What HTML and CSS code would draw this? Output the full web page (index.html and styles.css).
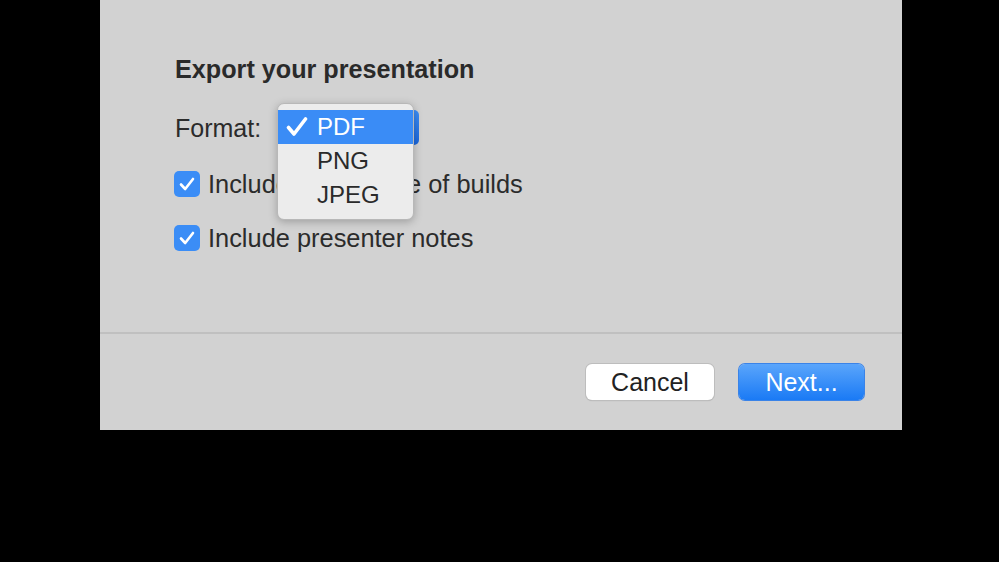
FILE: index.html
```html
<!DOCTYPE html>
<html>
<head>
<meta charset="utf-8">
<link rel="stylesheet" href="styles.css">
</head>
<body>
<div class="dialog">
  <div class="content">
    <h1 class="title">Export your presentation</h1>
    <div class="row format-row">
      <span class="label">Format:</span>
      <div class="popup-wrap">
        <div class="popup-button"></div>
        <div class="menu">
          <div class="item selected"><svg class="check" viewBox="0 0 22 22" width="22" height="22"><path d="M2.5 11.5 L8 18 L19.5 3" fill="none" stroke="#fff" stroke-width="3.6" stroke-linecap="round" stroke-linejoin="round"/></svg>PDF</div>
          <div class="item">PNG</div>
          <div class="item">JPEG</div>
        </div>
      </div>
    </div>
    <label class="row check-row">
      <span class="box"><svg viewBox="0 0 26 26" width="26" height="26"><path d="M7 13.5 L11.2 18 L19 8" fill="none" stroke="#fff" stroke-width="2.6" stroke-linecap="round" stroke-linejoin="round"/></svg></span>
      <span class="text">Include each stage of builds</span>
    </label>
    <label class="row check-row">
      <span class="box"><svg viewBox="0 0 26 26" width="26" height="26"><path d="M7 13.5 L11.2 18 L19 8" fill="none" stroke="#fff" stroke-width="2.6" stroke-linecap="round" stroke-linejoin="round"/></svg></span>
      <span class="text">Include presenter notes</span>
    </label>
  </div>
  <div class="footer">
    <button class="btn cancel">Cancel</button>
    <button class="btn next">Next...</button>
  </div>
</div>
</body>
</html>
```
FILE: styles.css
```css
html, body {
  margin: 0;
  padding: 0;
  background: #000;
  height: 100%;
}
body {
  font-family: "Liberation Sans", Arial, sans-serif;
  color: #2b2b2b;
}
.dialog {
  width: 802px;
  height: 430px;
  margin-left: 100px;
  background: #d2d2d2;
  display: flex;
  flex-direction: column;
}
.content {
  height: 334px;
  box-sizing: border-box;
  padding: 52px 0 0 75px;
  border-bottom: 2px solid #c0c0c0;
}
.title {
  margin: 0;
  font-size: 25.2px;
  font-weight: bold;
  line-height: 34px;
  color: #2a2a2a;
}
.row {
  display: flex;
  align-items: center;
  font-size: 25px;
}
.format-row {
  margin-top: 23px;
  height: 38px;
}
.label {
  width: 102px;
}
.popup-wrap {
  position: relative;
  width: 143px;
  height: 36px;
}
.popup-button {
  position: absolute;
  left: 0;
  top: 0;
  width: 142px;
  height: 35px;
  border-radius: 5px;
  background: linear-gradient(#3d8ff7, #1a66db);
}
.menu {
  position: absolute;
  left: 0;
  top: -7px;
  width: 137px;
  padding: 6px 0 8px;
  background: #ececec;
  border: 1px solid #b8b8b8;
  border-radius: 7px;
  box-shadow: 0 2px 8px rgba(0,0,0,0.25);
  box-sizing: border-box;
  height: 117px;
}
.item {
  height: 34px;
  line-height: 34px;
  padding-left: 39px;
  font-size: 24px;
  color: #2a2a2a;
  position: relative;
}
.item.selected {
  background: #3a8cf6;
  color: #fff;
}
.check {
  position: absolute;
  left: 8px;
  top: 6px;
}
.check-row {
  margin-top: 22px;
  height: 30px;
  font-size: 25.4px;
}
.check-row + .check-row {
  margin-top: 24px;
}
.box {
  width: 26px;
  height: 26px;
  border-radius: 5px;
  background: #3b8df6;
  margin-left: -1px;
  margin-right: 8px;
  display: flex;
}
.footer {
  flex: 1;
  display: flex;
  justify-content: flex-end;
  align-items: flex-start;
  padding: 30px 38px 0 0;
  gap: 25px;
}
.btn {
  font-family: "Liberation Sans", Arial, sans-serif;
  font-size: 25px;
  height: 36px;
  border-radius: 6px;
  border: none;
  padding: 0;
}
.cancel {
  width: 128px;
  background: #fff;
  color: #222;
  box-shadow: 0 0 0 1px #bdbdbd, 0 1px 1px rgba(0,0,0,0.2);
}
.next {
  width: 125px;
  background: linear-gradient(#5aa5fb, #1a7af5);
  color: #fff;
  box-shadow: 0 0 0 1px #3a83e8;
}
```
